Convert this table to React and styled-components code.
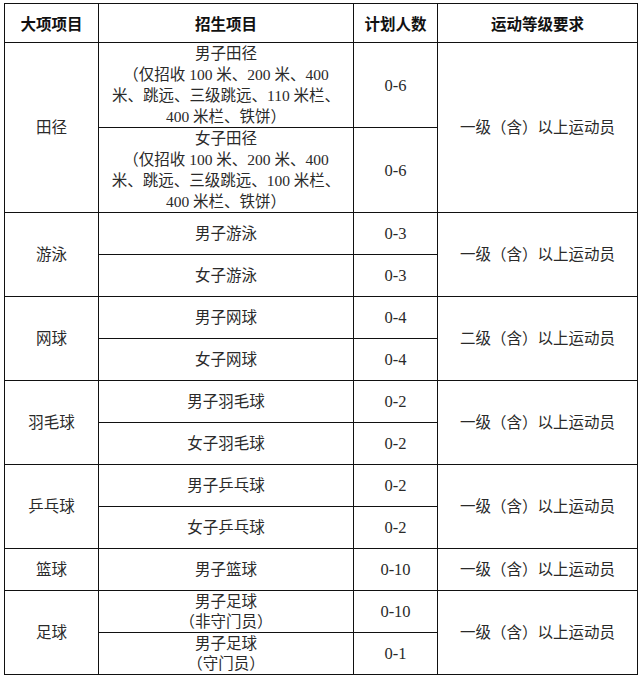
import React from "react";
import styled, { createGlobalStyle } from "styled-components";

const GlobalStyle = createGlobalStyle`
  html, body {
    margin: 0;
    padding: 0;
    background: #ffffff;
  }
`;

const rows = [
  {
    sport: "田径",
    level: "一级（含）以上运动员",
    items: [
      {
        lines: ["男子田径", "（仅招收 100 米、200 米、400", "米、跳远、三级跳远、110 米栏、", "400 米栏、铁饼）"],
        count: "0-6",
        height: 83,
      },
      {
        lines: ["女子田径", "（仅招收 100 米、200 米、400", "米、跳远、三级跳远、100 米栏、", "400 米栏、铁饼）"],
        count: "0-6",
        height: 82,
      },
    ],
  },
  {
    sport: "游泳",
    level: "一级（含）以上运动员",
    items: [
      { lines: ["男子游泳"], count: "0-3" },
      { lines: ["女子游泳"], count: "0-3" },
    ],
  },
  {
    sport: "网球",
    level: "二级（含）以上运动员",
    items: [
      { lines: ["男子网球"], count: "0-4" },
      { lines: ["女子网球"], count: "0-4" },
    ],
  },
  {
    sport: "羽毛球",
    level: "一级（含）以上运动员",
    items: [
      { lines: ["男子羽毛球"], count: "0-2" },
      { lines: ["女子羽毛球"], count: "0-2" },
    ],
  },
  {
    sport: "乒乓球",
    level: "一级（含）以上运动员",
    items: [
      { lines: ["男子乒乓球"], count: "0-2" },
      { lines: ["女子乒乓球"], count: "0-2" },
    ],
  },
  {
    sport: "篮球",
    level: "一级（含）以上运动员",
    items: [{ lines: ["男子篮球"], count: "0-10" }],
  },
  {
    sport: "足球",
    level: "一级（含）以上运动员",
    items: [
      { lines: ["男子足球", "（非守门员）"], count: "0-10", compact: true },
      { lines: ["男子足球", "（守门员）"], count: "0-1", compact: true },
    ],
  },
];

const App = () => {
  return (
    <Page>
      <GlobalStyle />
      <Table>
        <colgroup>
          <col style={{ width: 94 }} />
          <col style={{ width: 255 }} />
          <col style={{ width: 84 }} />
          <col style={{ width: 200 }} />
        </colgroup>
        <thead>
          <tr>
            <HeadCell>大项项目</HeadCell>
            <HeadCell>招生项目</HeadCell>
            <HeadCell>计划人数</HeadCell>
            <HeadCell>运动等级要求</HeadCell>
          </tr>
        </thead>
        <tbody>
          {rows.map((group) =>
            group.items.map((item, i) => (
              <Row key={group.sport + i} $height={item.height || 42}>
                {i === 0 && <Cell rowSpan={group.items.length}>{group.sport}</Cell>}
                <Cell $compact={item.compact}>
                  {item.lines.map((line, k) => (
                    <Line key={k}>{line}</Line>
                  ))}
                </Cell>
                <Cell $count>{item.count}</Cell>
                {i === 0 && <Cell rowSpan={group.items.length}>{group.level}</Cell>}
              </Row>
            ))
          )}
        </tbody>
      </Table>
    </Page>
  );
};

const Page = styled.div`
  padding: 3px 4px;
  background: #ffffff;
`;

const Table = styled.table`
  width: 634px;
  table-layout: fixed;
  border-collapse: collapse;
  border: 1.5px solid #111;
`;

const HeadCell = styled.th`
  height: 38px;
  padding: 0;
  border: 1.5px solid #111;
  font-family: "Noto Sans CJK SC", sans-serif;
  font-weight: 700;
  font-size: 15.5px;
  color: #111;
  text-align: center;
  vertical-align: middle;
`;

const Row = styled.tr`
  height: ${(p) => p.$height}px;
`;

const Cell = styled.td`
  padding: 0;
  border: 1.5px solid #111;
  font-family: "Liberation Serif", "Noto Sans CJK SC", serif;
  font-weight: 400;
  font-size: ${(p) => (p.$count ? "16.5px" : "15.5px")};
  line-height: ${(p) => (p.$compact ? "20px" : "21px")};
  color: #2a2a2a;
  text-align: center;
  vertical-align: middle;
`;

const Line = styled.div`
  white-space: nowrap;
`;

export default App;
